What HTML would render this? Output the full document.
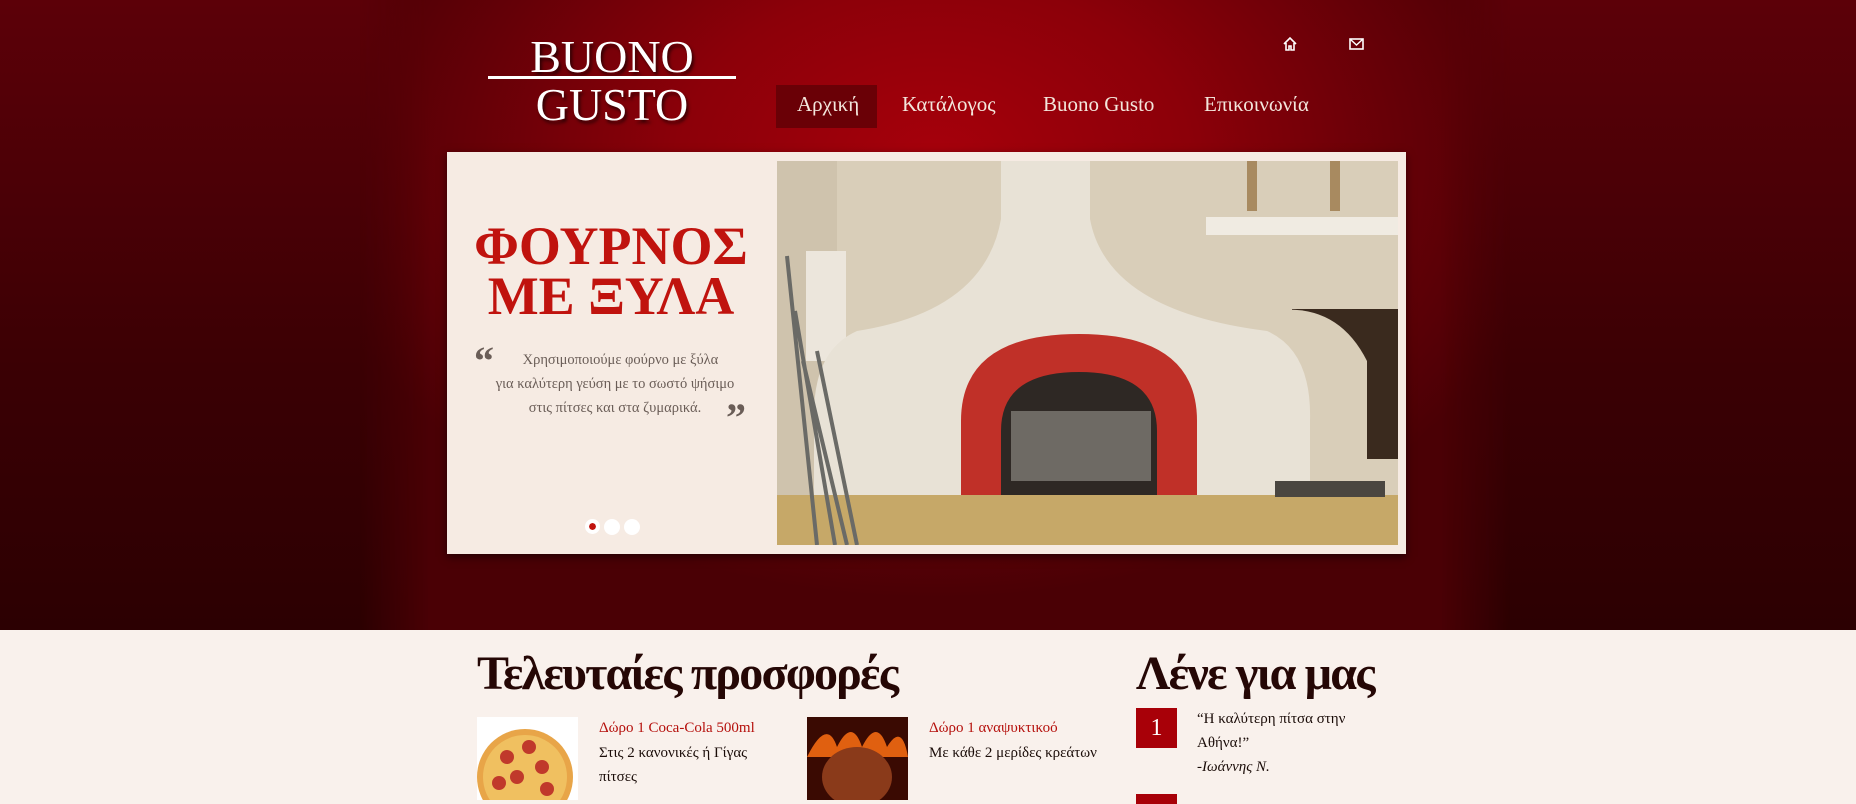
<!DOCTYPE html>
<html><head><meta charset="utf-8"><style>
*{margin:0;padding:0;box-sizing:border-box}
body{width:1856px;height:800px;overflow:hidden;background:#f9f1ec;font-family:"Liberation Serif","DejaVu Serif",serif;position:relative}
#hdr{position:absolute;left:0;top:0;width:1856px;height:630px;background:linear-gradient(180deg,#5c0008 0%,#3a0004 60%,#2c0002 100%)}
#hdr .c{position:absolute;left:360px;top:0;width:1150px;height:630px;background:radial-gradient(ellipse 55% 70% at 50% 25%,#a6000b 0%,#8c0009 40%,#640007 75%,#4a0005 100%);-webkit-mask-image:linear-gradient(90deg,transparent 0,#000 70px,#000 1080px,transparent 1150px);mask-image:linear-gradient(90deg,transparent 0,#000 70px,#000 1080px,transparent 1150px)}
.abs{position:absolute}
.logo{color:#fff;font-size:46px;text-align:center;width:248px;left:488px;text-shadow:2px 3px 3px rgba(0,0,0,.6);line-height:46px}
.nav{color:#f3e6dc;font-size:21px;top:92px}
.slide{left:447px;top:152px;width:959px;height:402px;background:#f6ebe3;box-shadow:0 3px 8px rgba(0,0,0,.5)}
h2{font-size:48px;font-weight:bold;color:#250705;letter-spacing:-1.8px;position:absolute;top:646px}
.red{color:#b5100c;font-size:15px}
.t{color:#1a0c08;font-size:15px;line-height:24px}
</style></head><body>
<div id="hdr"><div class="c"></div></div>
<div class="abs logo" style="top:34px">BUONO</div>
<div class="abs" style="left:488px;top:76px;width:248px;height:3px;background:#fff"></div>
<div class="abs logo" style="top:82px">GUSTO</div>
<svg class="abs" style="left:1282px;top:36px" width="16" height="16" viewBox="0 0 16 16"><path d="M2 8 L8 2 L14 8 M4 7 V14 H7 V10 H9 V14 H12 V7" fill="none" stroke="#fff" stroke-width="1.6"/></svg>
<svg class="abs" style="left:1349px;top:38px" width="15" height="12" viewBox="0 0 15 12"><rect x="1" y="1" width="13" height="10" fill="none" stroke="#fff" stroke-width="1.6"/><path d="M1 1 L7.5 7 L14 1" fill="none" stroke="#fff" stroke-width="1.4"/></svg>
<div class="abs" style="left:776px;top:85px;width:101px;height:43px;background:#6a0006"></div>
<div class="abs nav" style="left:797px">Αρχική</div>
<div class="abs nav" style="left:902px">Κατάλογος</div>
<div class="abs nav" style="left:1043px">Buono Gusto</div>
<div class="abs nav" style="left:1204px">Επικοινωνία</div>
<div class="abs slide"></div>
<div class="abs" style="left:447px;top:221px;width:328px;text-align:center;color:#c0130e;font-weight:bold;font-size:54px;line-height:50px">ΦΟΥΡΝΟΣ<br>ΜΕ ΞΥΛΑ</div>
<div class="abs" style="left:474px;top:337px;color:#6a5d57;font-size:40px;font-weight:bold">“</div>
<div class="abs" style="left:726px;top:394px;color:#6a5d57;font-size:40px;font-weight:bold">”</div>
<div class="abs" style="left:480px;top:348px;width:270px;text-align:center;color:#6a5d57;font-size:14.5px;line-height:24px">&nbsp;&nbsp;&nbsp;Χρησιμοποιούμε φούρνο με ξύλα<br>για καλύτερη γεύση με το σωστό ψήσιμο<br>στις πίτσες και στα ζυμαρικά.</div>
<div class="abs" style="left:585px;top:519px;width:15px;height:15px;border-radius:50%;background:#fff;border:4px solid #fff;box-shadow:inset 0 0 0 5px #c0130e"></div>
<div class="abs" style="left:604px;top:519px;width:16px;height:16px;border-radius:50%;background:#fff"></div>
<div class="abs" style="left:624px;top:519px;width:16px;height:16px;border-radius:50%;background:#fff"></div>
<svg class="abs" style="left:777px;top:161px" width="621" height="384" viewBox="0 0 621 384">
<rect width="621" height="384" fill="#d9ceb9"/>
<rect x="0" y="0" width="60" height="384" fill="#cfc3ad"/>
<rect x="29" y="90" width="40" height="110" fill="#ece6dc"/>
<rect x="429" y="56" width="192" height="18" fill="#f0ebe2"/>
<rect x="515" y="148" width="106" height="150" fill="#3a2a1e"/>
<path d="M494 150 Q560 140 590 200 L590 300 L494 300Z" fill="#d9ceb9"/>
<rect x="470" y="0" width="10" height="50" fill="#a88a60"/>
<rect x="553" y="0" width="10" height="50" fill="#a88a60"/>
<path d="M224 0 H313 V58 Q330 150 490 170 Q535 190 533 260 V334 H37 V260 Q35 190 80 170 Q208 150 224 58Z" fill="#e8e2d6"/>
<path d="M184 334 V260 Q184 173 302 173 Q420 173 420 260 V334Z" fill="#c03028"/>
<path d="M224 334 V270 Q224 211 302 211 Q380 211 380 270 V334Z" fill="#2e2824"/>
<rect x="234" y="250" width="140" height="70" fill="#6e6a64"/>
<rect x="218" y="334" width="200" height="14" fill="#b8392e"/>
<rect x="0" y="334" width="621" height="50" fill="#c6a868"/>
<path d="M10 95 L40 384 M18 150 L58 384 M26 200 L70 384 M40 190 L80 384" stroke="#6a6a66" stroke-width="4"/>
<rect x="498" y="320" width="110" height="16" fill="#4a4640"/>
</svg>
<h2 style="left:477px">Τελευταίες προσφορές</h2>
<h2 style="left:1136px">Λένε για μας</h2>
<svg class="abs" style="left:477px;top:717px" width="101" height="83"><rect width="101" height="83" fill="#fff"/><circle cx="48" cy="60" r="48" fill="#e8a548"/><circle cx="48" cy="60" r="42" fill="#f0c060"/><g fill="#c0392b"><circle cx="30" cy="40" r="7"/><circle cx="52" cy="30" r="7"/><circle cx="40" cy="60" r="7"/><circle cx="65" cy="50" r="7"/><circle cx="22" cy="66" r="7"/><circle cx="70" cy="72" r="7"/></g></svg>
<svg class="abs" style="left:807px;top:717px" width="101" height="83"><rect width="101" height="83" fill="#3a0a02"/><path d="M0 40 Q20 0 30 30 Q45 0 55 30 Q70 0 80 30 Q95 5 101 40Z" fill="#e06010"/><ellipse cx="50" cy="60" rx="35" ry="30" fill="#8a3a1a"/></svg>
<div class="abs red" style="left:599px;top:720px">Δώρο 1 Coca-Cola 500ml</div>
<div class="abs t" style="left:599px;top:741px;width:175px">Στις 2 κανονικές ή Γίγας πίτσες</div>
<div class="abs red" style="left:929px;top:720px">Δώρο 1 αναψυκτικοό</div>
<div class="abs t" style="left:929px;top:741px">Με κάθε 2 μερίδες κρεάτων</div>
<div class="abs" style="left:1136px;top:708px;width:41px;height:40px;background:#a80008;color:#fff;font-size:24px;text-align:center;line-height:40px">1</div>
<div class="abs" style="left:1136px;top:794px;width:41px;height:10px;background:#a80008"></div>
<div class="abs t" style="left:1197px;top:707px;width:160px">“Η καλύτερη πίτσα στην Αθήνα!”<br><i>-Ιωάννης Ν.</i></div>
</body></html>
